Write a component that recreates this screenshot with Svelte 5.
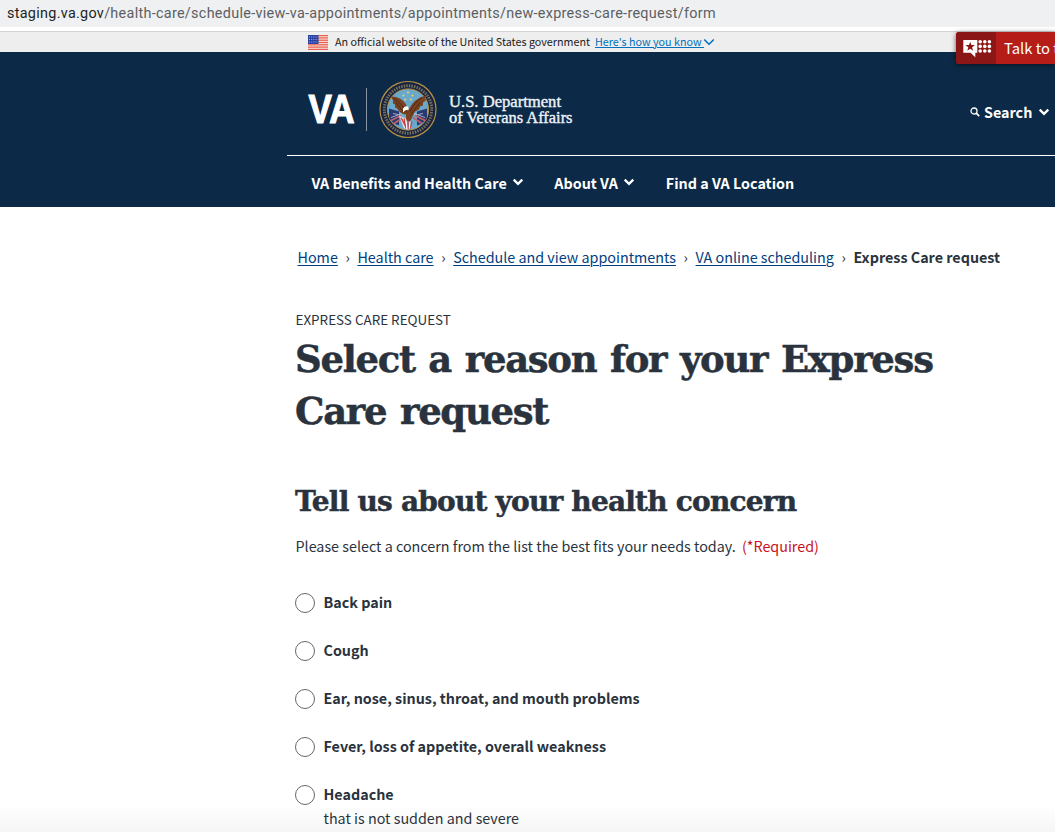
<script>
  const crumbs = ['Home', 'Health care', 'Schedule and view appointments', 'VA online scheduling'];
  const reasons = [
    { label: 'Back pain' },
    { label: 'Cough' },
    { label: 'Ear, nose, sinus, throat, and mouth problems' },
    { label: 'Fever, loss of appetite, overall weakness' },
    { label: 'Headache', hint: 'that is not sudden and severe' }
  ];
  const dots = [0, 1, 2].flatMap((r) => [0, 1, 2].map((c) => ({ x: 17.2 + c * 4.6, y: 2.8 + r * 4.6 })));
</script>

{#snippet chevron()}
  <svg class="chevron" width="12" height="8" viewBox="0 0 12 8"><path d="M1.7 1.6 6 5.9 10.3 1.6" fill="none" stroke="#fff" stroke-width="2.3" /></svg>
{/snippet}

<div class="page">
  <div class="url"><span class="host">staging.va.gov</span>/health-care/schedule-view-va-appointments/appointments/new-express-care-request/form</div>
  <div class="official">
    <svg class="flag" width="20" height="15" viewBox="0 0 20 15">
      <rect width="20" height="15" fill="#f7e4df" />
      {#each [0, 1, 2, 3, 4, 5, 6] as i}
        <rect y={i * 2.3} width="20" height="1.25" fill="#e9604e" />
      {/each}
      <rect width="10.5" height="9" fill="#2b43a5" />
      <path d="M1 2h9M1 4.5h9M1 7h9" stroke="#a9b7e2" stroke-width=".9" stroke-dasharray="1 1.2" />
    </svg>
    <span class="notice">An official website of the United States government</span>
    <a class="know" href="#top">Here's how you know&nbsp;</a>
    <svg class="thin" width="12" height="8" viewBox="0 0 12 8"><path d="M1.2 1.5 6 6.2 10.8 1.5" fill="none" stroke="#0071bb" stroke-width="1.6" /></svg>
  </div>

  <header>
    <div class="brand">
      <svg class="logo" width="270" height="64" viewBox="0 0 270 64">
        <text class="va" x=".5" y="44.5" textLength="46" lengthAdjust="spacingAndGlyphs">VA</text>
        <path d="M58.5 10v43" stroke="#8996a5" stroke-width="1" />
        <g transform="translate(100 31.5)">
          <circle r="28.6" fill="#b99145" />
          <circle r="27.4" fill="#17233f" />
          <circle r="23.7" fill="none" stroke="#b6a373" stroke-width="3" stroke-dasharray="1.5 1.1" opacity=".6" />
          <circle r="20.6" fill="#69a9cc" stroke="#b99145" stroke-width="1" />
          <g fill="#eed36b"><circle cx="-4.5" cy="-14" r="1" /><circle cy="-17" r="1" /><circle cx="4.5" cy="-14" r="1" /><circle cx="-2.8" cy="-10" r="1" /><circle cx="2.8" cy="-10" r="1" /></g>
          <path d="M-19-1-9 2v14q-7-2-10-8zM19-1 9 2v14q7-2 10-8z" fill="#293a70" />
          <path d="M-17 11-7 6M-14 14-5 8M17 11 7 6M14 14 5 8" stroke="#c0606b" stroke-width="1.8" />
          <path d="M-17 8-6 4M17 8 6 4M-15 4l5 1M15 4l-5 1" stroke="#d8d5e2" stroke-width=".7" />
          <path d="M-2 5C-6 5-9 2-11-1l-2-1 0-3-2-1 0-3-2-4c7 0 12 3 15 8l2 4 2-1C5-8 11-13 19-14l-2 3 1 2-3 2 0 3-3 1-1 3-4 2-2 4-3 6-4-1z" fill="#7a411e" />
          <path d="M-14-11C-8-7-4-2-1 3M14-12C9-9 5-4 2 2M-12-7l8 10M12-7 3 5" fill="none" stroke="#3f2218" stroke-width=".8" />
          <path d="M-5-1q2-3 5-2l1 3-4 1-2 2z" fill="#fff" />
          <path d="M-9 6-2 9 1 20-4 19z" fill="#e9e5e4" />
          <path d="M-7 8-3 16M-4 9-2 19M0 10v10M4 12 2 19" stroke="#c83b40" stroke-width="1.3" />
          <path d="M-2 12-1 20M2 12l-.5 7" stroke="#fff" stroke-width="1" />
        </g>
        <text class="dept" x="141" y="28.5" textLength="112" lengthAdjust="spacingAndGlyphs">U.S. Department</text>
        <text class="dept" x="141" y="45" textLength="123.5" lengthAdjust="spacingAndGlyphs">of Veterans Affairs</text>
      </svg>
      <div class="search">
        <svg width="10" height="10" viewBox="0 0 10 10"><circle cx="4" cy="4" r="3" fill="none" stroke="#fff" stroke-width="1.3" /><path d="m6.2 6.2 3 3" stroke="#fff" stroke-width="1.7" /></svg>
        <span>Search</span>{@render chevron()}
      </div>
    </div>
    <nav>
      <span class="n1">VA Benefits and Health Care</span>{@render chevron()}
      <span class="n2">About VA</span>{@render chevron()}
      <span class="n3">Find a VA Location</span>
    </nav>
  </header>

  <div class="crisis">
    <div class="badge">
      <svg width="30" height="20" viewBox="0 0 30 20">
        <path d="M.3 1h14v12.8h-2v4.4l-4.7-4.4H.3z" fill="#fff" />
        <path d="m7.2 2.7 1.2 3.3 3.6.1-2.9 2.2 1 3.4-2.9-2-2.9 2 1-3.4-2.9-2.2 3.6-.1z" fill="#8b1616" />
        {#each dots as d}<circle cx={d.x} cy={d.y} r="1.8" fill="#fff" />{/each}
      </svg>
    </div>
    <span>Talk to the</span>
  </div>

  <main>
    <div class="crumbs">
      {#each crumbs as c}<a href="#top">{c}</a><span class="sep">›</span>{/each}<b>Express Care request</b>
    </div>
    <div class="eyebrow">EXPRESS CARE REQUEST</div>
    <h1>Select a reason for your Express<br />Care request</h1>
    <h2>Tell us about your health concern</h2>
    <p class="prompt">Please select a concern from the list the best fits your needs today. <span>(*Required)</span></p>
    <div class="options">
      {#each reasons as r}
        <div class="option">
          <i></i>
          <div><b>{r.label}</b>{#if r.hint}<p>{r.hint}</p>{/if}</div>
        </div>
      {/each}
    </div>
  </main>
</div>

<style>
  :global(body) { margin: 0; overflow: hidden; }
  .page { position: relative; width: 1055px; height: 832px; overflow: hidden; box-sizing: border-box; background: linear-gradient(#fff 804px, #f6f6f6 832px); font-family: "Noto Sans CJK SC", "Noto Sans", sans-serif; font-size: 14.33px; color: #2a333d; white-space: nowrap; }
  .url { height: 27px; line-height: 27px; padding-left: 7px; background: #eff0f2; border-bottom: 4px solid #fff; font-family: Roboto, sans-serif; font-size: 14.4px; letter-spacing: .295px; color: #5c5f62; }
  .host { color: #1d1f21; }
  .official { box-sizing: border-box; height: 21px; border-top: 1px solid #d4d4d4; background: #eee; display: flex; align-items: center; padding-left: 308px; font-size: 10.75px; line-height: 20px; color: #212121; }
  .notice { margin-left: 7px; }
  .know { margin-left: 5px; color: #0071bb; text-underline-offset: 1px; }
  .thin { margin-left: -1px; }
  a { text-decoration: underline; text-decoration-thickness: 1px; }
  header { height: 155px; background: #0c2a47; color: #fff; font-weight: 700; }
  .brand { box-sizing: border-box; height: 104px; margin-left: 287px; border-bottom: 1px solid #fff; display: flex; padding: 26px 0 0 21px; }
  .logo { flex: none; overflow: visible; }
  .va { font-family: "Liberation Sans", sans-serif; font-weight: 700; font-size: 40px; fill: #fff; stroke: #fff; stroke-width: 1.2; }
  .dept { font-family: "Liberation Serif", serif; font-weight: 400; font-size: 17.5px; fill: #eef2f7; stroke: #eef2f7; stroke-width: .4; }
  .search { height: 20px; margin: 24px 0 0 392px; display: flex; align-items: center; line-height: 20px; }
  .search span { margin: 0 6px 0 4px; }
  .chevron { flex: none; }
  nav { display: flex; align-items: center; height: 51px; padding: 1px 0 0 311.5px; box-sizing: border-box; }
  nav .chevron { margin-left: 5.5px; }
  .n2 { margin-left: 30px; }
  .n3 { margin-left: 30.5px; }
  .crisis { position: absolute; left: 956px; top: 32px; width: 99px; height: 32px; display: flex; align-items: center; background: #b51d19; border-radius: 3px 0 0 3px; box-shadow: 0 1px 5px #0009; color: #fff; line-height: 32px; }
  .badge { box-sizing: border-box; flex: none; width: 40px; height: 32px; padding: 2px 0 0 3px; background: #8b1616; border-radius: 3px 0 0 3px; display: grid; place-items: center; }
  .crisis span { margin-left: 8px; font-size: 14.8px; }
  main { padding: 40px 0 0 295px; }
  .crumbs { display: flex; height: 20px; line-height: 20px; margin-left: 2.5px; }
  .crumbs a { color: #004080; text-underline-offset: 2px; }
  .sep { width: 19.6px; text-align: center; }
  .eyebrow { margin-top: 42px; height: 20px; line-height: 20px; font-size: 13.45px; padding-left: .5px; }
  h1, h2 { margin: 0; font-family: "DejaVu Serif", serif; font-weight: 700; color: #2a333d; -webkit-text-stroke: .5px #2a333d; }
  h1 { margin-top: 4px; font-size: 37px; line-height: 52px; letter-spacing: -1.3px; word-spacing: 2.1px; }
  h2 { margin-top: 45px; font-size: 28px; line-height: 40px; letter-spacing: -.8px; }
  .prompt { margin: 13px 0 0; padding-left: .5px; height: 22px; line-height: 22px; }
  .prompt span { color: #c9101c; margin-left: 3px; }
  .options { margin-top: 36px; }
  .option { display: flex; height: 48px; line-height: 20px; }
  .option i { box-sizing: border-box; width: 20px; height: 20px; border: 1px solid #65696e; border-radius: 50%; background: #fff; margin: 0 8.5px 0 0; flex: none; }
  .option div { margin-top: -1px; }
  .option p { margin: 4px 0 0; }
</style>
